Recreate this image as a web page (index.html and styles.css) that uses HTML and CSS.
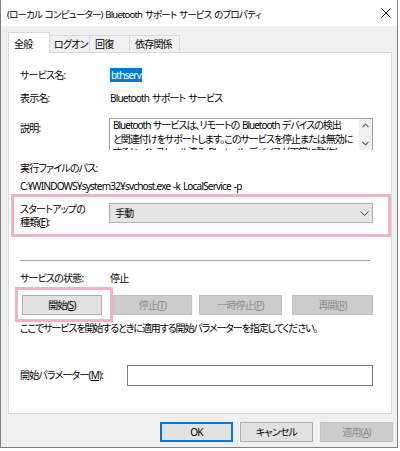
FILE: index.html
```html
<!DOCTYPE html>
<html lang="ja">
<head>
<meta charset="utf-8">
<title>Bluetooth サポート サービス のプロパティ</title>
<link rel="stylesheet" href="styles.css">
</head>
<body>
<div class="window">
  <div class="titlebar">
    <span class="title">(ローカル コンピューター) Bluetooth サポート サービス のプロパティ</span>
    <svg class="close" width="10" height="10" viewBox="0 0 10 10"><path d="M0.5 0.5L9.5 9.5M9.5 0.5L0.5 9.5" stroke="#000" stroke-width="1" fill="none"/></svg>
  </div>
  <div class="client">
    <div class="tabs">
      <div class="tab tab-active">全般</div>
      <div class="tab tab-logon">ログオン</div>
      <div class="tab tab-recover">回復</div>
      <div class="tab tab-dep">依存関係</div>
    </div>
    <div class="panel">
      <div class="row r-name"><span class="label">サービス名:</span><span class="sel">bthserv</span></div>
      <div class="row r-disp"><span class="label">表示名:</span><span class="value">Bluetooth サポート サービス</span></div>
      <div class="row r-desc">
        <span class="label label-desc">説明:</span>
        <div class="desc">
          <div class="desc-text">
            <div>Bluetooth サービスは、リモートの Bluetooth デバイスの検出</div>
            <div>と関連付けをサポートします。このサービスを停止または無効に</div>
            <div>すると、インストール済み Bluetooth デバイスが正常に動作し</div>
          </div>
          <div class="vscroll">
            <svg width="7" height="5" viewBox="0 0 7 5"><path d="M0.5 4.2L3.5 1.2L6.5 4.2" stroke="#606060" stroke-width="1.2" fill="none"/></svg>
            <svg width="7" height="5" viewBox="0 0 7 5"><path d="M0.5 0.8L3.5 3.8L6.5 0.8" stroke="#606060" stroke-width="1.2" fill="none"/></svg>
          </div>
        </div>
      </div>
      <div class="line path-label">実行ファイルのパス:</div>
      <div class="line path">C:¥WINDOWS¥system32¥svchost.exe -k LocalService -p</div>
      <div class="startup">
        <div class="label-startup"><div>スタートアップの</div><div>種類(<u>E</u>):</div></div>
        <div class="combo">
          <span>手動</span>
          <svg width="9" height="5" viewBox="0 0 9 5"><path d="M0.5 0.5L4.5 4.5L8.5 0.5" stroke="#404040" stroke-width="1" fill="none"/></svg>
        </div>
      </div>
      <div class="sep"></div>
      <div class="row r-status"><span class="label">サービスの状態:</span><span class="value">停止</span></div>
      <div class="btnrow">
        <span class="mark"><span class="btn btn-start">開始(<u>S</u>)</span></span>
        <span class="btn btn-dis btn-stop">停止(<u>T</u>)</span>
        <span class="btn btn-dis btn-pause">一時停止(<u>P</u>)</span>
        <span class="btn btn-dis btn-resume">再開(<u>R</u>)</span>
      </div>
      <div class="line hint">ここでサービスを開始するときに適用する開始パラメーターを指定してください。</div>
      <div class="row r-param">
        <span class="label label-param">開始パラメーター(<u>M</u>):</span>
        <div class="input"></div>
      </div>
    </div>
    <div class="footer">
      <span class="btn fbtn btn-default">OK</span>
      <span class="btn fbtn">キャンセル</span>
      <span class="btn fbtn btn-dis">適用(<u>A</u>)</span>
    </div>
  </div>
</div>
</body>
</html>
```

FILE: styles.css
```css
html, body {
  margin: 0;
  padding: 0;
  background: #ffffff;
}

body {
  font-family: "Noto Sans", "Noto Sans CJK JP", sans-serif;
  font-size: 10px;
  font-feature-settings: "palt";
  letter-spacing: -0.8px;
  word-spacing: 1px;
  color: #000;
  line-height: 13px;
}

.window {
  width: 398px;
  height: 448px;
  box-sizing: border-box;
  border-left: 1px solid #808080;
  border-right: 1px solid #808080;
  border-bottom: 1px solid #808080;
  display: flex;
  flex-direction: column;
}

.titlebar {
  height: 26px;
  flex: none;
  background: #fff;
  display: flex;
  align-items: flex-start;
  justify-content: space-between;
  padding: 8px 6px 0 6px;
  box-sizing: border-box;
}

.title {
  font-size: 9.5px;
  letter-spacing: -0.8px;
  line-height: 13px;
  white-space: nowrap;
}

.close {
  display: block;
}

.client {
  flex: 1;
  background: #f0f0f0;
  padding: 6px 0 0 7px;
}

.tabs {
  display: flex;
  align-items: flex-end;
  height: 21px;
  margin-bottom: -1px;
}

.tab {
  box-sizing: border-box;
  height: 18px;
  padding: 2px 0 0 4px;
  border-top: 1px solid #d9d9d9;
  border-right: 1px solid #d9d9d9;
  border-bottom: 1px solid #d9d9d9;
  background: #f0f0f0;
  white-space: nowrap;
  overflow: hidden;
}

.tab-active {
  height: 21px;
  width: 42px;
  padding-top: 5px;
  padding-left: 5px;
  background: #fff;
  border-left: 1px solid #d9d9d9;
  border-bottom: none;
}

.tab-logon { width: 40px; }
.tab-recover { width: 40px; padding-left: 5px; }
.tab-dep { width: 50px; padding-left: 5px; }

.panel {
  width: 384px;
  height: 362px;
  box-sizing: border-box;
  background: #fff;
  border: 1px solid #d9d9d9;
  padding-left: 11px;
}

.row {
  display: flex;
  align-items: center;
}

.label {
  width: 90px;
  flex: none;
  white-space: nowrap;
}

.value {
  white-space: nowrap;
}

.r-name {
  margin-top: 15px;
  height: 14px;
}

.sel {
  background: #0078d7;
  color: #fff;
  height: 14px;
  line-height: 14px;
  padding: 0 1px;
}

.r-disp {
  margin-top: 9px;
  height: 14px;
}

.r-desc {
  margin-top: 13px;
  align-items: flex-start;
}

.label-desc {
  width: 89px;
  padding-top: 4px;
}

.desc {
  width: 264px;
  height: 32px;
  box-sizing: border-box;
  border: 1px solid #a0a0a0;
  border-bottom: none;
  display: flex;
  overflow: hidden;
}

.desc-text {
  flex: 1;
  padding-left: 3px;
  line-height: 13.5px;
  letter-spacing: -1px;
  white-space: nowrap;
  overflow: hidden;
}

.vscroll {
  width: 13px;
  flex: none;
  background: #f0f0f0;
  display: flex;
  flex-direction: column;
  align-items: center;
  padding-top: 4px;
  gap: 13px;
  box-sizing: border-box;
}

.vscroll svg {
  display: block;
}

.line {
  white-space: nowrap;
}

.path-label {
  margin-top: 12px;
}

.path {
  margin-top: 5px;
}

.startup {
  margin-top: 1px;
  margin-left: -9px;
  width: 380px;
  box-sizing: border-box;
  border: 3px solid #f2b1cb;
  padding: 6px 0 5px 6px;
  display: flex;
  align-items: flex-start;
}

.label-startup {
  width: 89px;
  flex: none;
  white-space: nowrap;
}

.combo {
  width: 264px;
  height: 20px;
  box-sizing: border-box;
  background: #e5e5e5;
  border: 1px solid #adadad;
  display: flex;
  align-items: center;
  justify-content: space-between;
  padding: 0 3px 0 5px;
}

.combo svg {
  display: block;
}

.sep {
  margin-top: 23px;
  width: 350px;
  height: 1px;
  background: #a0a0a0;
}

.r-status {
  margin-top: 11px;
}

.btnrow {
  margin-top: 2px;
  margin-left: -5px;
  display: flex;
  align-items: center;
}

.mark {
  display: flex;
  border: 3px solid #f2b1cb;
  padding: 5px 8px 4px 4px;
}

.btn {
  box-sizing: border-box;
  height: 20px;
  line-height: 18px;
  background: #e1e1e1;
  border: 1px solid #adadad;
  text-align: center;
  white-space: nowrap;
  display: block;
}

.btn-start { width: 80px; }
.btn-stop { width: 79px; }
.btn-pause { width: 83px; margin-left: 7px; }
.btn-resume { width: 81px; margin-left: 10px; }

.btn-dis {
  background: #cccccc;
  border-color: #bfbfbf;
  color: #8c8c8c;
}

.hint {
  margin-top: 0;
  letter-spacing: -1.1px;
}

.r-param {
  margin-top: 30px;
}

.label-param {
  width: 107px;
}

.input {
  width: 246px;
  height: 21px;
  box-sizing: border-box;
  border: 1px solid #7a7a7a;
  background: #fff;
}

.footer {
  margin-top: 8px;
  display: flex;
  justify-content: flex-end;
  gap: 7px;
  padding-right: 4px;
}

.fbtn {
  width: 73px;
}

.btn-default {
  border: 2px solid #0078d7;
  line-height: 16px;
}
```
